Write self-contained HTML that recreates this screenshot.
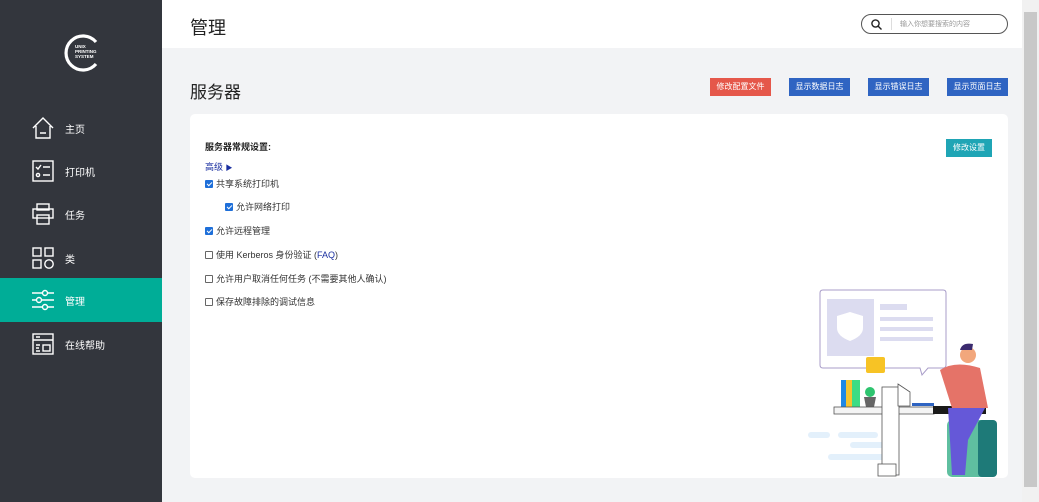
<!DOCTYPE html>
<html><head><meta charset="utf-8"><style>
*{margin:0;padding:0;box-sizing:border-box}
body{width:1039px;height:502px;overflow:hidden;background:#f2f3f5;font-family:"Liberation Sans","Noto Sans CJK SC",sans-serif;position:relative}
.side{position:absolute;left:0;top:0;width:162px;height:502px;background:#33363d}
.nav{position:absolute;left:0;width:162px;height:44px;color:#fff;font-size:10px}
.nav span{position:absolute;left:65px;top:15px}
.nav svg{position:absolute;left:32px;top:11px}
.hdr{position:absolute;left:162px;top:0;width:860px;height:48px;background:#fff}
.sb{position:absolute;left:1022px;top:0;width:17px;height:502px;background:#f1f1f1}
.thumb{position:absolute;left:1024px;top:12px;width:13px;height:475px;background:#c8c8c8}
.btn{position:absolute;top:78px;height:18px;color:#fff;font-size:8px;text-align:center;line-height:18px}
.card{position:absolute;left:190px;top:114px;width:818px;height:364px;background:#fff;border-radius:5px}
.cb{position:absolute;font-size:9px;color:#333;display:flex;align-items:center}
.cb i{display:inline-block;width:8px;height:8px;border:1px solid #666;margin-right:3px;border-radius:1px}
.cb i.on{background:#1e6fd9;border-color:#1e6fd9;position:relative}
.cb i.on:after{content:"";position:absolute;left:2px;top:0px;width:2px;height:4px;border:solid #fff;border-width:0 1px 1px 0;transform:rotate(45deg)}
</style></head><body>
<div class="side">
 <svg style="position:absolute;left:63px;top:33px" width="38" height="40" viewBox="0 0 38 40"><path d="M33 9 A17 17 0 1 0 33 31" fill="none" stroke="#fff" stroke-width="3.2"/><text x="12" y="15" font-size="4.5" font-weight="bold" fill="#fff" font-family="Liberation Sans">UNIX</text><text x="12" y="20" font-size="4.5" font-weight="bold" fill="#fff" font-family="Liberation Sans">PRINTING</text><text x="12" y="25" font-size="4.5" font-weight="bold" fill="#fff" font-family="Liberation Sans">SYSTEM</text></svg>
 <div class="nav" style="top:106px"><svg width="22" height="22" viewBox="0 0 22 22" fill="none" stroke="#fff" stroke-width="1.4"><path d="M1 11 L11 1 L21 11 M4 9 V21 H18 V9 M8 16 H14"/></svg><span>主页</span></div>
 <div class="nav" style="top:149px"><svg width="22" height="22" viewBox="0 0 22 22" fill="none" stroke="#fff" stroke-width="1.4"><rect x="1" y="1" width="20" height="20"/><path d="M4 7 L6 9 L9 5 M11 7 H18 M11 15 H18"/><circle cx="6" cy="15" r="1.6"/></svg><span>打印机</span></div>
 <div class="nav" style="top:192px"><svg width="22" height="22" viewBox="0 0 22 22" fill="none" stroke="#fff" stroke-width="1.4"><rect x="5" y="1" width="12" height="6"/><rect x="1" y="6" width="20" height="9"/><rect x="5" y="12" width="12" height="9"/></svg><span>任务</span></div>
 <div class="nav" style="top:236px"><svg width="22" height="22" viewBox="0 0 22 22" fill="none" stroke="#fff" stroke-width="1.4"><rect x="1" y="1" width="8" height="8"/><rect x="13" y="1" width="8" height="8"/><rect x="1" y="13" width="8" height="8"/><circle cx="17" cy="17" r="4.2"/></svg><span>类</span></div>
 <div class="nav" style="top:278px;background:#00ad97"><svg width="22" height="22" viewBox="0 0 22 22" fill="none" stroke="#fff" stroke-width="1.4"><path d="M0 4 H10 M16 4 H22 M0 11 H4 M10 11 H22 M0 18 H10 M16 18 H22"/><circle cx="13" cy="4" r="2.5"/><circle cx="7" cy="11" r="2.5"/><circle cx="13" cy="18" r="2.5"/></svg><span>管理</span></div>
 <div class="nav" style="top:322px"><svg width="22" height="22" viewBox="0 0 22 22" fill="none" stroke="#fff" stroke-width="1.4"><rect x="1" y="1" width="20" height="20"/><path d="M1 7 H21 M4 4 H8 M4 12 H8 M4 15 H7 M4 18 H8"/><rect x="11" y="12" width="7" height="6"/></svg><span>在线帮助</span></div>
</div>
<div class="hdr">
 <div style="position:absolute;left:28px;top:14px;font-size:18px;color:#222">管理</div>
 <div style="position:absolute;left:699px;top:14px;width:147px;height:20px;border:1px solid #555;border-radius:10px">
  <svg style="position:absolute;left:9px;top:4px" width="11" height="11" viewBox="0 0 11 11" fill="none" stroke="#222" stroke-width="1.4"><circle cx="4.5" cy="4.5" r="3.6"/><path d="M7.2 7.2 L10.5 10.5"/></svg>
  <div style="position:absolute;left:29px;top:3px;width:1px;height:12px;background:#ddd"></div>
  <div style="position:absolute;left:38px;top:4px;font-size:7px;color:#999">输入你想要搜索的内容</div>
 </div>
</div>
<div style="position:absolute;left:190px;top:78px;font-size:17px;color:#222">服务器</div>
<div class="btn" style="left:710px;width:61px;background:#e5574a">修改配置文件</div>
<div class="btn" style="left:789px;width:61px;background:#2f64c2">显示数据日志</div>
<div class="btn" style="left:868px;width:61px;background:#2f64c2">显示错误日志</div>
<div class="btn" style="left:947px;width:61px;background:#2f64c2">显示页面日志</div>
<div class="card">
 <div style="position:absolute;left:15px;top:26px;font-size:9px;font-weight:bold;color:#222">服务器常规设置:</div>
 <div style="position:absolute;left:756px;top:25px;width:46px;height:18px;background:#1fa5b5;color:#fff;font-size:8px;text-align:center;line-height:18px">修改设置</div>
 <div style="position:absolute;left:15px;top:46px;font-size:9px;color:#1a2fa0">高级 <span style="font-size:7px">▶</span></div>
 <div class="cb" style="left:15px;top:63px"><i class="on"></i>共享系统打印机</div>
 <div class="cb" style="left:35px;top:86px"><i class="on"></i>允许网络打印</div>
 <div class="cb" style="left:15px;top:110px"><i class="on"></i>允许远程管理</div>
 <div class="cb" style="left:15px;top:134px"><i></i>使用 Kerberos 身份验证 (<span style="color:#1a2fa0">FAQ</span>)</div>
 <div class="cb" style="left:15px;top:158px"><i></i>允许用户取消任何任务 (不需要其他人确认)</div>
 <div class="cb" style="left:15px;top:181px"><i></i>保存故障排除的调试信息</div>
</div>
<svg style="position:absolute;left:800px;top:280px" width="222" height="200" viewBox="0 0 222 200">
 <g fill="#e3f0fb"><rect x="8" y="152" width="22" height="6" rx="3"/><rect x="38" y="152" width="40" height="6" rx="3"/><rect x="50" y="162" width="35" height="6" rx="3"/><rect x="28" y="174" width="60" height="6" rx="3"/></g>
 <path d="M23 10 H143 Q146 10 146 13 V85 Q146 88 143 88 H128 L122 95 L120 88 H23 Q20 88 20 85 V13 Q20 10 23 10Z" fill="#fff" stroke="#a89cc8" stroke-width="1"/>
 <rect x="27" y="19" width="47" height="57" fill="#dcdcf0"/>
 <path d="M50 32 L63 36 V48 Q63 56 50 61 Q37 56 37 48 V36Z" fill="#fff"/>
 <g fill="#dcdcf0"><rect x="80" y="24" width="27" height="6"/><rect x="80" y="37" width="53" height="4"/><rect x="80" y="47" width="53" height="4"/><rect x="80" y="57" width="53" height="4"/></g>
 <rect x="66" y="77" width="19" height="16" rx="2" fill="#f7c325"/>
 <rect x="41" y="100" width="5" height="27" fill="#1e88e5"/><rect x="46" y="100" width="6" height="27" fill="#f4c430"/><rect x="52" y="100" width="8" height="27" fill="#3ddc84"/>
 <circle cx="70" cy="112" r="5" fill="#2ec46f"/><path d="M64 117 H76 L74 127 H66Z" fill="#666"/>
 <rect x="34" y="127" width="100" height="7" fill="#f4f4f4" stroke="#555" stroke-width=".8"/>
 <rect x="133" y="126" width="53" height="8" fill="#1a1a1a"/>
 <rect x="112" y="123" width="22" height="3" fill="#2f64c2"/>
 <rect x="82" y="107" width="17" height="88" fill="#fff" stroke="#555" stroke-width=".8"/>
 <rect x="78" y="184" width="18" height="12" fill="#fff" stroke="#555" stroke-width=".8"/>
 <path d="M98 104 L110 112 V126 H98Z" fill="#fff" stroke="#555" stroke-width=".8"/>
 <rect x="147" y="140" width="50" height="57" rx="5" fill="#5fbfa0"/><rect x="178" y="140" width="19" height="57" rx="4" fill="#1e7a78"/>
 <path d="M140 90 Q155 80 180 88 L188 128 H152Z" fill="#e57368"/>
 <path d="M148 128 H185 L168 160 L165 195 H152 L150 160Z" fill="#6558d8"/>
 <circle cx="168" cy="75" r="8" fill="#f2a77c"/><path d="M160 70 Q162 62 173 64 L172 70Z" fill="#3b2a6e"/>
</svg>
<div class="sb"></div><div class="thumb"></div>
</body></html>
